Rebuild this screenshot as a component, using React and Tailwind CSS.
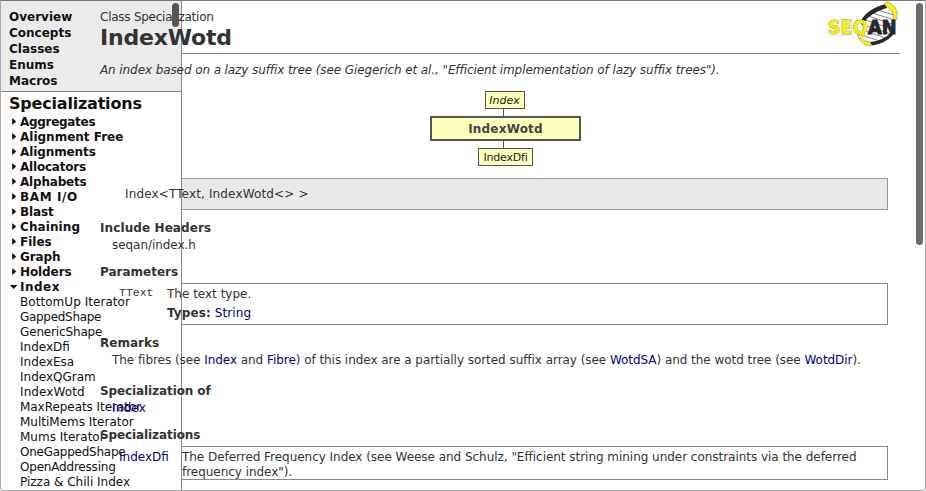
const groups = [
  ['Aggregates', 'tracking-[-0.3px]'],
  ['Alignment Free', ''],
  ['Alignments', 'tracking-[-0.1px]'],
  ['Allocators', 'tracking-[-0.2px]'],
  ['Alphabets', 'tracking-[-0.2px]'],
  ['BAM I/O', 'tracking-[0.6px]'],
  ['Blast', 'tracking-[-0.1px]'],
  ['Chaining', 'tracking-[0.1px]'],
  ['Files', ''],
  ['Graph', 'tracking-[-0.1px]'],
  ['Holders', 'tracking-[-0.1px]'],
  ['Index', 'tracking-[0.5px]'],
];
const items = [
  ['BottomUp Iterator', 'tracking-[0.05px]'],
  ['GappedShape', 'tracking-[-0.3px]'],
  ['GenericShape', 'tracking-[-0.15px]'],
  ['IndexDfi', ''],
  ['IndexEsa', ''],
  ['IndexQGram', ''],
  ['IndexWotd', 'tracking-[0.1px]'],
  ['MaxRepeats Iterator', 'tracking-[-0.05px]'],
  ['MultiMems Iterator', ''],
  ['Mums Iterator', ''],
  ['OneGappedShape', 'tracking-[-0.25px]'],
  ['OpenAddressing', 'tracking-[-0.2px]'],
  ['Pizza & Chili Index', ''],
];

function Arrow({ open }) {
  return (
    <svg className="ml-[9px] h-[15px] w-[10px] shrink-0" viewBox="0 0 10 15">
      <path fill="#111" d={open ? 'M0 5H7.4L3.7 9Z' : 'M2.2 3L6.2 6.5L2.2 10Z'} />
    </svg>
  );
}

function Sidebar() {
  return (
    <nav className="flex h-[489px] w-[181px] flex-col overflow-hidden border-r border-[#888] text-[#111] [grid-area:1/1]">
      <div className="flex h-[91px] shrink-0 flex-col border-b border-[#888] bg-[#ebebeb] pt-[8px] pl-[8px] font-bold leading-[16px]">
        {['Overview', 'Concepts', 'Classes', 'Enums', 'Macros'].map((t) => <a key={t}>{t}</a>)}
      </div>
      <h2 className="h-[23px] shrink-0 pl-[8px] text-[16px] font-bold leading-[23px] tracking-[-0.2px]">Specializations</h2>
      {groups.map(([t, spacing]) => (
        <div key={t} className="flex h-[15px] shrink-0 font-bold">
          <Arrow open={t === 'Index'} />
          <span className={`whitespace-nowrap ${spacing}`}>{t}</span>
        </div>
      ))}
      {items.map(([t, spacing]) => <a key={t} className={`h-[15px] shrink-0 whitespace-nowrap pl-[19px] ${spacing}`}>{t}</a>)}
    </nav>
  );
}

function Link({ children }) {
  return <a className="text-[#000080]">{children}</a>;
}

function Heading({ children, spacing = 'tracking-[-0.1px]' }) {
  return <h3 className={`h-[15px] font-bold text-[#333] ${spacing}`}>{children}</h3>;
}

function Logo() {
  return (
    <svg className="-mt-[9px] h-[48px] w-[74px] shrink-0" viewBox="826 1 74 48">
      <path d="M860 34C858 20 870 9 887 6C900 17 896 34 871 43Z" fill="#fff" />
      <g stroke="#666" strokeWidth=".8" fill="none">
        <path d="M877 10L894 15M872 13L895 20M868 16L895 25M865 20L893 29M863 25L891 34M862 30L886 38M861 35L880 41" />
      </g>
      <path d="M861 21C865 12 876 6 886 4L887 8C880 10 871 14 866 20L862 26Z" fill="#282828" />
      <path d="M870 42C879 41 886 38 890 33L895 32C891 39 882 44 872 45.5Z" fill="#282828" />
      <path d="M886 1.8C894 3 899 10 896.5 20L893.5 20C894 13 891 8 885 5.5Z" fill="#f8f800" stroke="#888" strokeWidth=".6" />
      <path d="M860 31C857 36 862 41 870 42L871 46C864 46 856 39 858 31Z" fill="#f8f800" stroke="#888" strokeWidth=".6" />
      <g fontFamily="DejaVu Sans, sans-serif" fontWeight="bold" fontSize="19.5">
        <text x="827.8" y="33.6" textLength="40" lengthAdjust="spacingAndGlyphs" fill="#f8f000" stroke="#888" strokeWidth=".8" paintOrder="stroke">SEQ</text>
        <text x="868" y="33.6" textLength="28.5" lengthAdjust="spacingAndGlyphs" fill="#282828" stroke="#282828" strokeWidth="1">AN</text>
      </g>
    </svg>
  );
}

function Content() {
  return (
    <main className="relative flex h-[489px] flex-col overflow-hidden pl-[99px] pt-[9px] text-[#333] [grid-area:1/1]">
      <header className="flex h-[43px] w-[800px] shrink-0 justify-between">
        <div>
          <div className="tracking-[-0.25px]">Class Specialization</div>
          <h1 className="text-[22px] font-bold leading-[26px] tracking-[-0.2px]">IndexWotd</h1>
        </div>
        <Logo />
      </header>
      <div className="ml-[81px] h-px w-[719px] shrink-0 bg-[#888]" />
      <p className="mt-[9px] italic tracking-[-0.092px]">An index based on a lazy suffix tree (see Giegerich et al., "Efficient implementation of lazy suffix trees").</p>
      <div className="mt-[13px] ml-[330px] flex w-[151px] flex-col items-center text-[11px] text-[#222]">
        <div className="mr-[2px] h-[18px] w-[40px] border border-[#555] bg-[#ffffbb] text-center italic leading-[17px]">Index</div>
        <div className="mr-[4px] h-[7px] w-px bg-[#555]" />
        <div className="h-[25px] w-[151px] border-2 border-[#555] bg-[#ffffbb] text-center text-[12px] font-bold leading-[22px] tracking-[0.2px] text-[#444]">IndexWotd</div>
        <div className="mr-[4px] h-[7px] w-px bg-[#555]" />
        <div className="h-[18px] w-[55px] border border-[#555] bg-[#ffffbb] text-center leading-[17px] tracking-[-0.2px]">IndexDfi</div>
      </div>
      <div className="mt-[12px] ml-[82px] h-[32px] w-[706px] shrink-0 border border-l-0 border-[#999] bg-[#e9e9e9] pt-[8px]">
        <div className="-ml-[57px] tracking-[0.14px]">Index&lt;TText, IndexWotd&lt;&gt; &gt;</div>
      </div>
      <div className="mt-[11px]"><Heading spacing="tracking-[0.1px]">Include Headers</Heading></div>
      <div className="mt-[2px] pl-[12px] tracking-[-0.05px]">seqan/index.h</div>
      <div className="mt-[12px]"><Heading spacing="tracking-normal">Parameters</Heading></div>
      <div className="mt-[3px] ml-[82px] h-[42px] w-[706px] shrink-0 border border-l-0 border-[#888] pt-[3px]">
        <div className="-ml-[63px] flex">
          <code className="-mt-[2px] w-[48px] font-['Liberation_Mono',monospace] text-[11.5px]">TText</code>
          <div>
            <div>The text type.</div>
            <div className="mt-[4px] tracking-[0.1px]"><b>Types:</b> <Link>String</Link></div>
          </div>
        </div>
      </div>
      <div className="mt-[11px]"><Heading spacing="tracking-normal">Remarks</Heading></div>
      <p className="mt-[2px] whitespace-nowrap pl-[12px] tracking-[-0.048px]">The fibres (see <Link>Index</Link> and <Link>Fibre</Link>) of this index are a partially sorted suffix array (see <Link>WotdSA</Link>) and the wotd tree (see <Link>WotdDir</Link>).</p>
      <div className="mt-[16px]"><Heading>Specialization of</Heading></div>
      <div className="mt-[2px] pl-[12px] tracking-[0.2px]"><Link>Index</Link></div>
      <div className="mt-[12px]"><Heading>Specializations</Heading></div>
      <div className="mt-[3px] ml-[82px] h-[34px] w-[706px] shrink-0 border border-l-0 border-[#888] pt-[3px]">
        <div className="-ml-[63px] flex">
          <div className="w-[63px] shrink-0"><Link>IndexDfi</Link></div>
          <div className="whitespace-nowrap tracking-[-0.035px]">The Deferred Frequency Index (see Weese and Schulz, "Efficient string mining under constraints via the deferred<br />frequency index").</div>
        </div>
      </div>
    </main>
  );
}

export default function App() {
  return (
    <div className="relative grid h-[491px] w-[926px] overflow-hidden rounded-b-[4px] border border-[#aaa] border-t-[#777] bg-white font-['DejaVu_Sans',sans-serif] text-[12px] leading-[15px]">
      <Sidebar />
      <Content />
      <div className="absolute left-[171px] top-[2px] h-[24px] w-[7px] rounded-full bg-[#555]" />
      <div className="absolute left-[915px] top-[2px] h-[242px] w-[7px] rounded-full bg-[#6b6b6b]" />
    </div>
  );
}
